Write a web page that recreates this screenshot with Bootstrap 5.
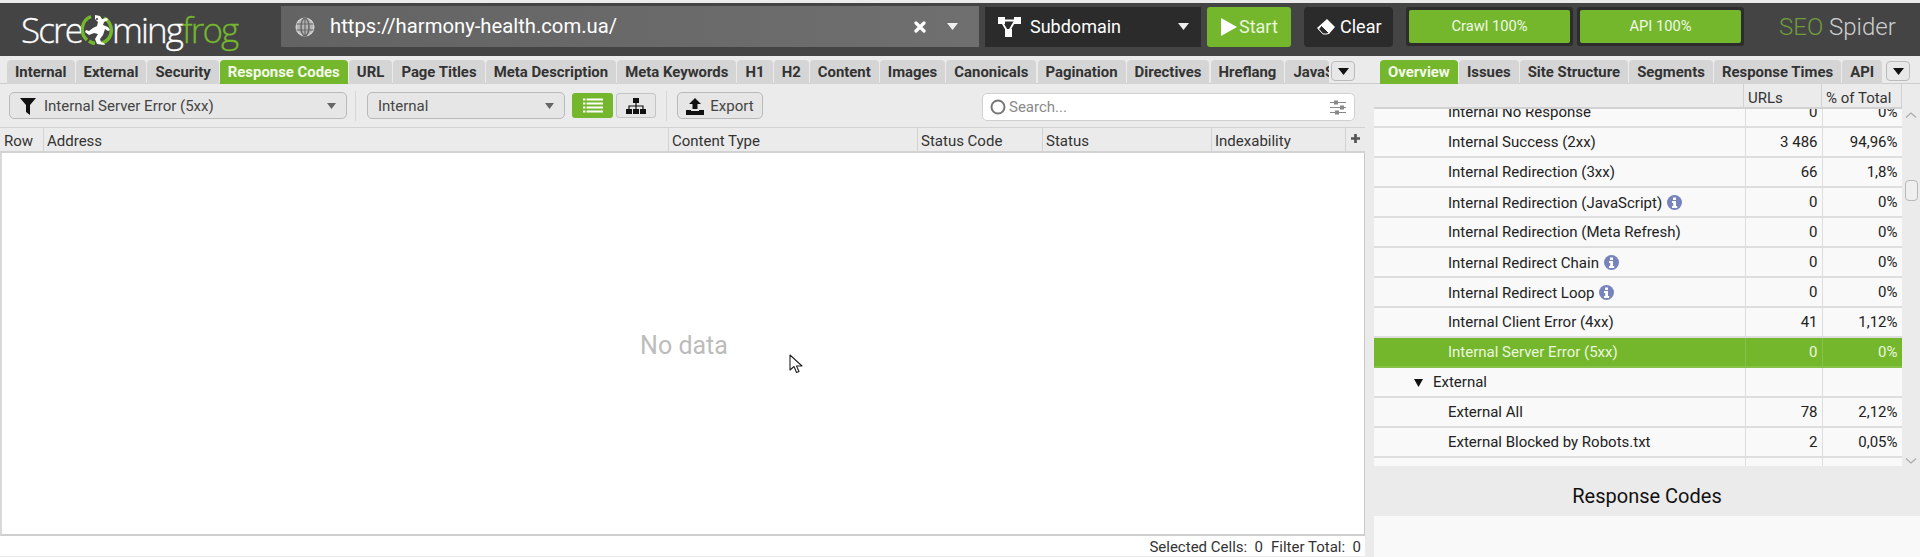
<!DOCTYPE html>
<html lang="en">
<head>
<meta charset="utf-8">
<title>Screaming Frog SEO Spider</title>
<link href="https://cdn.jsdelivr.net/npm/bootstrap@5.3.0/dist/css/bootstrap.min.css" rel="stylesheet">
<style>
html,body{height:100%;overflow:hidden;background:#ebebeb;}
body{font-family:Roboto,"Liberation Sans",sans-serif;font-size:15px;color:#222;padding-top:3px;}
.sf-top{height:53px;background:#444;color:#fff;}
.sf-logo{width:281px;padding-left:21px;font-family:"Open Sans",sans-serif;font-weight:300;font-size:35px;letter-spacing:-1.9px;line-height:1;-webkit-text-stroke:.3px #fff;}
.sf-logo svg{width:32px;height:33px;margin:0 -1px;flex:none;}
.sf-logo .sf-green{color:#74b72c;-webkit-text-stroke:.3px #74b72c;}
.sf-url{width:698px;height:41px;margin-bottom:6px;background:linear-gradient(90deg,#636363,#6f6f6f);padding-left:14px;font-size:20.25px;}
.sf-url .sf-addr{margin-left:15px;flex:1;}
.sf-url .sf-x{margin-right:21px;}
.sf-url .sf-car{margin-right:21px;}
.sf-mode{width:216px;height:40px;margin:0 6px 6px;background:#2b2b2b;font-size:18px;padding:0 12px 0 13px;}
.sf-mode .sf-label{margin-left:9px;flex:1;}
.sf-start{width:84px;height:40px;margin:0 13px 6px 0;background:#74b72c;border-radius:3px;color:#e9f5dc;font-size:18px;padding-left:13px;gap:1px;}
.sf-clear{width:89px;height:40px;margin:0 13px 6px 0;background:#2b2b2b;border-radius:4px;font-size:18px;padding-left:13px;gap:5px;}
.sf-meter{width:167px;height:39px;margin:0 4px 6px 0;background:#2d2d2d;border-radius:3px;padding:3px;}
.sf-meter span{display:flex;align-items:center;justify-content:center;width:100%;height:100%;background:#74b72c;border-radius:2px;font-size:14.7px;color:#f1f8e8;}
.sf-brand{margin:0 0 6px 31px;font-size:24px;font-weight:300;line-height:1;}
.sf-brand b{font-weight:300;color:#6f9c3c;}
.sf-brand i{font-style:normal;color:#cfcfcf;}
.sf-body{height:501px;}
.sf-left{width:1366px;}
.sf-right{width:554px;}
.sf-tabs{height:28px;padding-top:4px;border-bottom:1px solid #ccc;}
.sf-left .sf-tabs{padding-left:7px;}
.sf-right .sf-tabs{padding-left:14px;margin-left:0;}
.sf-tab{height:24px;background:#d5d5d5;border-radius:4px 4px 0 0;padding:0 8px;margin-right:1.1px;font-size:14.9px;font-weight:700;color:#333;white-space:nowrap;line-height:24px;flex:none;}
.sf-tab.sf-on{background:#74b72c;color:#f4fae9;}
.sf-clip{width:44px;overflow:hidden;padding:0 0 0 8px;margin-right:2px;background:#d5d5d5;border-radius:4px 4px 0 0;}
.sf-more{width:24px;height:20px;border:1px solid #bbb;border-radius:4px;background:#e8e8e8;margin-top:1px;flex:none;}
.sf-bar{height:43px;padding-left:9px;}
.sf-select{height:27px;padding-top:1px;background:#e6e6e6;border:1px solid #b9b9b9;border-radius:5px;font-size:15px;color:#444;flex:none;}
.sf-sel-a{width:338px;padding-left:10px;padding-right:10px;margin-right:8px;}
.sf-sel-b{width:198px;padding-left:10px;padding-right:10px;margin:0 7px 0 11px;}
.sf-sep{width:1px;height:30px;background:#d6d6d6;flex:none;}
.sf-view{width:41px;height:25px;border-radius:3px;flex:none;}
.sf-view.sf-on{background:#74b72c;margin-right:3px;}
.sf-view.sf-off{background:#e6e6e6;border:1px solid #c4c4c4;width:40px;margin-right:10px;}
.sf-export{width:86px;height:27px;padding-top:1px;margin:0 219px 0 10px;background:#e6e6e6;border:1px solid #b9b9b9;border-radius:5px;color:#444;gap:6px;flex:none;}
.sf-search{width:373px;height:28px;margin-top:3px;background:#fff;border:1px solid #d0d0d0;border-radius:5px;padding:0 8px 0 7px;color:#8a8a8a;flex:none;gap:3px;}
.sf-search .sf-ph{flex:1;}
.sf-head{height:26px;background:#ebebeb;border-top:1px solid #d2d2d2;border-bottom:2px solid #d2d2d2;width:1365px;}
.sf-hcell{height:100%;padding-left:3px;border-right:1px solid #d2d2d2;color:#333;line-height:26px;flex:none;}
.w-row{width:44px;padding-left:4px;}.w-addr{width:625px;}.w-ctype{width:249px;}.w-code{width:125px;}.w-stat{width:169px;}.w-idx{width:134px;}
.w-plus{flex:1;border-right:0;padding:0 0 2px;}
.sf-empty{width:1365px;height:383px;background:#fff;border-left:2px solid #d8d8d8;border-right:1px solid #c8c8c8;border-bottom:2px solid #cfcfcf;font-size:25px;color:#bcbcbc;position:relative;}
.sf-empty .sf-nd{margin:5px 0 0 2px;}
.sf-cursor{position:absolute;left:787px;top:201px;width:15px;height:21px;}
.sf-status{width:1365px;height:20px;background:#fff;padding-right:4px;gap:8px;color:#333;font-size:15px;line-height:22px;}
.sf-coltop{height:25px;margin-left:8px;width:528px;background:#ebebeb;border-bottom:2px solid #d2d2d2;}
.sf-coltop div{height:100%;border-right:1px solid #d2d2d2;padding-left:4px;line-height:28px;color:#333;flex:none;}
.sf-coltop .col-u{width:78px}
.sf-coltop .col-p{width:80px}
.sf-scroll{height:357px;margin-left:8px;}
.sf-rows{width:528px;height:357px;overflow:hidden;flex:none;}
.sf-table{table-layout:fixed;width:528px;margin:-12px 0 0;--bs-table-bg:transparent;}
.cw-a{width:371px}.cw-b{width:77px}.cw-c{width:80px}
.sf-table td{height:30px;padding:1px 4px 0 0;background:#f9f9f9;border:0;border-bottom:2px solid #dedede;border-right:1px solid #dedede;color:#222;vertical-align:middle;line-height:1;white-space:nowrap;box-shadow:none;}
.sf-table td:first-child{padding-left:74px;}
.sf-table td+td{text-align:right;}
.sf-table td.sf-group{padding-left:59px;position:relative;}
.sf-table tr.sf-sel td{background:#74b72c;color:#ecf6df;border-color:#87c248;}
.sf-tri{position:absolute;left:40px;top:11px;width:9px;height:8px;}
.sf-info{width:15px;height:15px;vertical-align:-2px;margin-left:5px;}
.sf-track{width:18px;flex:none;}
.sf-chev{width:12px;height:6px;margin:3px 0 0 3px;flex:none;}
.sf-chev-d{margin:auto 0 2px 3px;}
.sf-thumb{width:13px;height:21px;margin:62px 0 0 3px;background:#efefef;border:1px solid #b8b8b8;border-radius:4px;flex:none;}
.sf-title{height:50px;margin-left:8px;padding-top:10px;font-size:20px;font-weight:400;color:#111;}
.sf-detail{height:41px;margin-left:8px;background:#f9f9f9;}
</style>
</head>
<body>
<div class="sf-top d-flex align-items-center">
  <div class="sf-logo d-flex align-items-center">Scre<svg viewBox="0 0 32 33"><path d="M10 3.500A14 14 0 0 0 6 27M23 5a14 14 0 0 1 5 20c-2 3-5 4.500-8 5.200M8 28c2 1.500 3 2 6 2.500" fill="none" stroke="#74b72c" stroke-width="3.500"/><path d="M14 2l5 1 2 3 5-1 1 2-4 2-1 3 5 2 2 3-2 1-3-2-2 6-3 4 1 3 3 1 1 2-8-1-2-5 3-5-4-1-5 2-4-3 1-2 3 1 4-3 4-2 1-4-3-3z" fill="#fff"/><circle cx="16" cy="6" r="1.100" fill="#444"/></svg>ming<span class="sf-green">frog</span></div>
  <div class="sf-url d-flex align-items-center">
    <svg width="20" height="20" viewBox="0 0 20 20" fill="none" stroke="#d2d2d2" stroke-width="1.500"><circle cx="10" cy="10" r="8.800" fill="#b4b4b4"/><ellipse cx="10" cy="10" rx="4" ry="8.800" stroke="#666"/><path d="M1.500 7h17M1.500 13h17M10 1v18" stroke="#666" stroke-width="1.200"/></svg>
    <span class="sf-addr">https://harmony-health.com.ua/</span>
    <svg class="sf-x" width="12" height="12" viewBox="0 0 12 12"><path d="M2 2l8 8M10 2l-8 8" stroke="#fff" stroke-width="3.200" stroke-linecap="round"/></svg>
    <svg class="sf-car" width="11" height="7" viewBox="0 0 11 7"><path d="M0 0h11L5.500 7z" fill="#f0f0f0"/></svg>
  </div>
  <div class="sf-mode d-flex align-items-center">
    <svg width="23" height="20" viewBox="0 0 23 20"><path d="M3 3.500h17M3 3.500l7 12" stroke="#fff" stroke-width="1.800"/><path d="M18 2l-7 12" stroke="#fff" stroke-width="1.800"/><rect x="0" y="0" width="7" height="7" fill="#fff"/><rect x="16" y="0" width="7" height="7" fill="#fff"/><rect x="7" y="12" width="7" height="8" fill="#fff"/></svg>
    <span class="sf-label">Subdomain</span>
    <svg width="11" height="7" viewBox="0 0 11 7"><path d="M0 0h11L5.500 7z" fill="#f0f0f0"/></svg>
  </div>
  <div class="sf-start d-flex align-items-center"><svg width="18" height="18" viewBox="0 0 18 18"><path d="M1 0l16 9-16 9z" fill="#fff"/></svg>Start</div>
  <div class="sf-clear d-flex align-items-center"><svg width="18" height="16" viewBox="0 0 18 16"><path d="M10 0l8 8-6 7H6L0 9z" fill="#fff"/><path d="M4.500 6.500l7 7-1 1.500H6L1.500 10z" fill="#2b2b2b" stroke="#fff"/></svg>Clear</div>
  <div class="sf-meter"><span>Crawl 100%</span></div>
  <div class="sf-meter"><span>API 100%</span></div>
  <div class="sf-brand"><b>SEO</b> <i>Spider</i></div>
</div>
<div class="sf-body d-flex">
  <div class="sf-left">
    <div class="sf-tabs d-flex">
      <div class="sf-tab">Internal</div><div class="sf-tab">External</div><div class="sf-tab">Security</div><div class="sf-tab sf-on">Response Codes</div><div class="sf-tab">URL</div><div class="sf-tab">Page Titles</div><div class="sf-tab">Meta Description</div><div class="sf-tab">Meta Keywords</div><div class="sf-tab">H1</div><div class="sf-tab">H2</div><div class="sf-tab">Content</div><div class="sf-tab">Images</div><div class="sf-tab">Canonicals</div><div class="sf-tab">Pagination</div><div class="sf-tab">Directives</div><div class="sf-tab">Hreflang</div><div class="sf-tab sf-clip">JavaScript</div>
      <div class="sf-more d-flex align-items-center justify-content-center"><svg width="11" height="7" viewBox="0 0 11 7"><path d="M0 0h11L5.500 7z" fill="#111"/></svg></div>
    </div>
    <div class="sf-bar d-flex align-items-center">
      <div class="sf-select sf-sel-a d-flex align-items-center"><svg class="me-2" width="16" height="17" viewBox="0 0 16 17"><path d="M0 0h16L10 7v10l-4-3V7z" fill="#111"/></svg><span class="flex-grow-1">Internal Server Error (5xx)</span><svg width="9" height="6" viewBox="0 0 9 6"><path d="M0 0h9L4.500 6z" fill="#666"/></svg></div>
      <div class="sf-sep"></div>
      <div class="sf-select sf-sel-b d-flex align-items-center"><span class="flex-grow-1">Internal</span><svg width="9" height="6" viewBox="0 0 9 6"><path d="M0 0h9L4.500 6z" fill="#666"/></svg></div>
      <div class="sf-view sf-on d-flex align-items-center justify-content-center"><svg width="20" height="15" viewBox="0 0 20 15"><path d="M0 1.500h20M0 5.500h20M0 9.500h20M0 13.500h20" stroke="#fff" stroke-width="2"/><path d="M3 0v15" stroke="#74b72c" stroke-width="1.200"/></svg></div>
      <div class="sf-view sf-off d-flex align-items-center justify-content-center"><svg width="20" height="16" viewBox="0 0 20 16"><rect x="7" y="0" width="6" height="5" fill="#111"/><rect x="0" y="11" width="6" height="5" fill="#111"/><rect x="7" y="11" width="6" height="5" fill="#111"/><rect x="14" y="11" width="6" height="5" fill="#111"/><path d="M10 5v6M3 11V8h14v3" fill="none" stroke="#111" stroke-width="1.200"/></svg></div>
      <div class="sf-sep"></div>
      <div class="sf-export d-flex align-items-center justify-content-center"><svg width="18" height="17" viewBox="0 0 18 17"><path d="M9 0l6 6h-3.500v5h-5V6H3z" fill="#111"/><path d="M0 12h5v1h8v-1h5v5H0z" fill="#111"/></svg>Export</div>
      <div class="sf-search d-flex align-items-center"><svg width="16" height="16" viewBox="0 0 16 16"><circle cx="8" cy="8" r="6.500" fill="none" stroke="#777" stroke-width="2"/></svg><span class="sf-ph">Search...</span><svg width="16" height="15" viewBox="0 0 16 15"><path d="M0 2.500h16M0 7.500h16M0 12.500h16" stroke="#888" stroke-width="1.200"/><rect x="4" y=".5" width="4" height="4" fill="#888"/><rect x="10" y="5.500" width="4" height="4" fill="#888"/><rect x="5" y="10.500" width="4" height="4" fill="#888"/></svg></div>
    </div>
    <div class="sf-head d-flex">
      <div class="sf-hcell w-row">Row</div><div class="sf-hcell w-addr">Address</div><div class="sf-hcell w-ctype">Content Type</div><div class="sf-hcell w-code">Status Code</div><div class="sf-hcell w-stat">Status</div><div class="sf-hcell w-idx">Indexability</div>
      <div class="sf-hcell w-plus d-flex align-items-center justify-content-center"><svg width="9" height="9" viewBox="0 0 10 10"><path d="M5 0v10M0 5h10" stroke="#555" stroke-width="3"/></svg></div>
    </div>
    <div class="sf-empty d-flex align-items-center justify-content-center">
      <span class="sf-nd">No data</span>
      <svg class="sf-cursor" viewBox="0 0 15 21"><path d="M1 1v15l4-3.500 2.500 6 2.500-1-2.500-5.500H13z" fill="#fff" stroke="#222" stroke-width="1.100" stroke-linejoin="round"/></svg>
    </div>
    <div class="sf-status d-flex justify-content-end"><span>Selected Cells:&nbsp; 0</span><span>Filter Total:&nbsp; 0</span></div>
  </div>
  <div class="sf-right">
    <div class="sf-tabs d-flex">
      <div class="sf-tab sf-on">Overview</div><div class="sf-tab">Issues</div><div class="sf-tab">Site Structure</div><div class="sf-tab">Segments</div><div class="sf-tab">Response Times</div><div class="sf-tab me-1">API</div>
      <div class="sf-more d-flex align-items-center justify-content-center"><svg width="11" height="7" viewBox="0 0 11 7"><path d="M0 0h11L5.500 7z" fill="#111"/></svg></div>
    </div>
    <div class="sf-coltop d-flex">
      <div class="flex-grow-1"></div><div class="col-u">URLs</div><div class="col-p">% of Total</div>
    </div>
    <div class="sf-scroll d-flex">
      <div class="sf-rows">
        <table class="table sf-table">
          <colgroup><col class="cw-a"><col class="cw-b"><col class="cw-c"></colgroup>
          <tbody>
            <tr><td>Internal No Response</td><td>0</td><td>0%</td></tr>
            <tr><td>Internal Success (2xx)</td><td>3 486</td><td>94,96%</td></tr>
            <tr><td>Internal Redirection (3xx)</td><td>66</td><td>1,8%</td></tr>
            <tr><td>Internal Redirection (JavaScript)<svg class="sf-info" viewBox="0 0 15 15"><circle cx="7.500" cy="7.500" r="7.500" fill="#7683bd"/><rect x="6" y="2.500" width="3" height="2.500" fill="#fff"/><path d="M5 6h4v5h1.200v2H5v-2h1.200V8H5z" fill="#fff"/></svg></td><td>0</td><td>0%</td></tr>
            <tr><td>Internal Redirection (Meta Refresh)</td><td>0</td><td>0%</td></tr>
            <tr><td>Internal Redirect Chain<svg class="sf-info" viewBox="0 0 15 15"><circle cx="7.500" cy="7.500" r="7.500" fill="#7683bd"/><rect x="6" y="2.500" width="3" height="2.500" fill="#fff"/><path d="M5 6h4v5h1.200v2H5v-2h1.200V8H5z" fill="#fff"/></svg></td><td>0</td><td>0%</td></tr>
            <tr><td>Internal Redirect Loop<svg class="sf-info" viewBox="0 0 15 15"><circle cx="7.500" cy="7.500" r="7.500" fill="#7683bd"/><rect x="6" y="2.500" width="3" height="2.500" fill="#fff"/><path d="M5 6h4v5h1.200v2H5v-2h1.200V8H5z" fill="#fff"/></svg></td><td>0</td><td>0%</td></tr>
            <tr><td>Internal Client Error (4xx)</td><td>41</td><td>1,12%</td></tr>
            <tr class="sf-sel"><td>Internal Server Error (5xx)</td><td>0</td><td>0%</td></tr>
            <tr><td class="sf-group"><svg class="sf-tri" viewBox="0 0 9 8"><path d="M0 0h9L4.500 8z" fill="#111"/></svg>External</td><td></td><td></td></tr>
            <tr><td>External All</td><td>78</td><td>2,12%</td></tr>
            <tr><td>External Blocked by Robots.txt</td><td>2</td><td>0,05%</td></tr>
            <tr><td></td><td></td><td></td></tr>
          </tbody>
        </table>
      </div>
      <div class="sf-track d-flex flex-column align-items-start">
        <svg class="sf-chev" viewBox="0 0 12 6"><path d="M1 5.500L6 1l5 4.500" fill="none" stroke="#aaa" stroke-width="1.200"/></svg>
        <div class="sf-thumb"></div>
        <svg class="sf-chev sf-chev-d" viewBox="0 0 12 6"><path d="M1 .5L6 5l5-4.500" fill="none" stroke="#aaa" stroke-width="1.200"/></svg>
      </div>
    </div>
    <div class="sf-title d-flex align-items-center justify-content-center">Response Codes</div>
    <div class="sf-detail"></div>
  </div>
</div>
</body>
</html>
